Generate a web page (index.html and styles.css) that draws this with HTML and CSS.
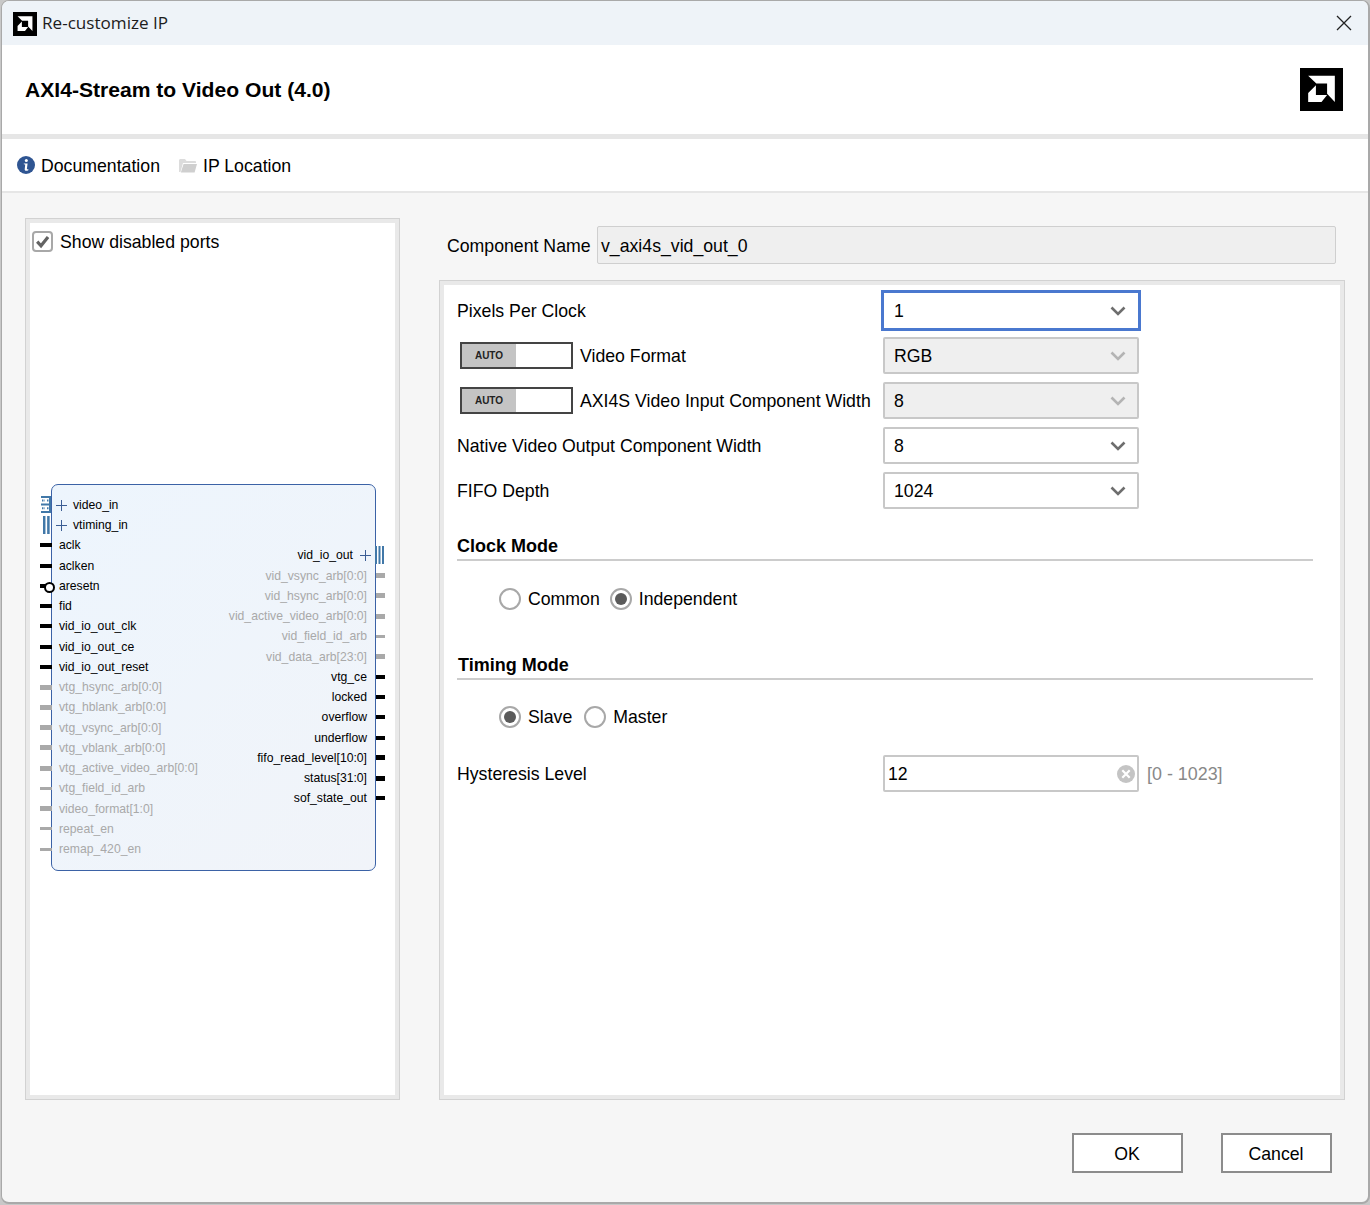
FILE: index.html
```html
<!DOCTYPE html>
<html lang="en">
<head>
<meta charset="utf-8">
<title>Re-customize IP</title>
<link rel="stylesheet" href="styles.css">
</head>
<body>
<div class="window">
  <div class="titlebar">
    <svg class="logo-small" viewBox="0 0 100 100"><rect width="100" height="100" fill="#000"/><path fill="#fff" d="M19 18H81V79L63 60V36H38Z"/><path fill="#fff" d="M37 40L19 58V79H50L63 63H37Z"/></svg>
    <span class="title-text">Re-customize IP</span>
    <svg class="close" viewBox="0 0 16 16"><path d="M1 1L15 15M15 1L1 15" stroke="#222" stroke-width="1.3" fill="none"/></svg>
  </div>
  <div class="header">
    <h1 class="ip-name">AXI4-Stream to Video Out (4.0)</h1>
    <svg class="logo-big" viewBox="0 0 100 100"><rect width="100" height="100" fill="#000"/><path fill="#fff" d="M19 18H81V79L63 60V36H38Z"/><path fill="#fff" d="M37 40L19 58V79H50L63 63H37Z"/></svg>
  </div>
  <div class="toolbar">
    <span class="tool">
      <svg class="info" viewBox="0 0 18 18"><circle cx="9" cy="9" r="9" fill="#2f5592"/><circle cx="9.3" cy="4.4" r="1.5" fill="#fff"/><path d="M6.8 7.4H10.6L9.9 12.8C9.9 13.4 10.5 13.5 11.3 13.1V14.2C9.8 15 7.6 15.1 7.7 13.2L8.2 8.6L6.8 8.3Z" fill="#fff"/></svg>
      Documentation
    </span>
    <span class="tool tool-ip">
      <svg class="folder" viewBox="0 0 18 15"><path d="M0 2.5C0 1.6.6 1 1.5 1H6L7.5 3H16C16.6 3 17 3.4 17 4V5H4L1.5 14H0Z" fill="#dcdcdc"/><path d="M4.6 6H18L15.6 14.5H1.8Z" fill="#cfcfcf"/></svg>
      IP Location
    </span>
  </div>
  <div class="main">
    <section class="symbol-panel">
      <label class="show-ports">
        <span class="checkbox"><svg viewBox="0 0 16 16"><path d="M3 8.2L6.6 12L13.2 3.8" stroke="#636363" stroke-width="3" fill="none"/></svg></span>
        Show disabled ports
      </label>
      <div class="symbol">
        <div class="ports ports-left">
          <div class="port iface"><svg class="plus" viewBox="0 0 11 11"><path d="M5.5 0V11M0 5.5H11" stroke="#3b5d94" stroke-width="1"/></svg>video_in
            <svg class="bus-icon bus-grid" viewBox="0 0 10 17"><path d="M0 1H10M0 8.5H10M0 16H10" stroke="#4178a8" stroke-width="2"/><path d="M1 4.5H4M6 4.5H9M1 12.2H4M6 12.2H9" stroke="#4178a8" stroke-width="2" stroke-dasharray="1.5 1"/><path d="M9 0V17" stroke="#4178a8" stroke-width="2"/></svg>
          </div>
          <div class="port iface"><svg class="plus" viewBox="0 0 11 11"><path d="M5.5 0V11M0 5.5H11" stroke="#3b5d94" stroke-width="1"/></svg>vtiming_in
            <svg class="bus-icon bus-two" viewBox="0 0 7 18"><path d="M1.2 0V18M5.4 0V18" stroke="#4178a8" stroke-width="2.5"/></svg>
          </div>
          <div class="port on">aclk</div>
          <div class="port on">aclken</div>
          <div class="port on neg">aresetn</div>
          <div class="port on">fid</div>
          <div class="port on">vid_io_out_clk</div>
          <div class="port on">vid_io_out_ce</div>
          <div class="port on">vid_io_out_reset</div>
          <div class="port off wide">vtg_hsync_arb[0:0]</div>
          <div class="port off wide">vtg_hblank_arb[0:0]</div>
          <div class="port off wide">vtg_vsync_arb[0:0]</div>
          <div class="port off wide">vtg_vblank_arb[0:0]</div>
          <div class="port off wide">vtg_active_video_arb[0:0]</div>
          <div class="port off thin">vtg_field_id_arb</div>
          <div class="port off wide">video_format[1:0]</div>
          <div class="port off thin">repeat_en</div>
          <div class="port off thin">remap_420_en</div>
        </div>
        <div class="ports ports-right">
          <div class="port iface">vid_io_out<svg class="plus plus-r" viewBox="0 0 11 11"><path d="M5.5 0V11M0 5.5H11" stroke="#3b5d94" stroke-width="1"/></svg>
            <svg class="bus-icon bus-three" viewBox="0 0 9 18"><path d="M1 0V18M4.5 0V18M8 0V18" stroke="#4178a8" stroke-width="2"/></svg>
          </div>
          <div class="port off wide">vid_vsync_arb[0:0]</div>
          <div class="port off wide">vid_hsync_arb[0:0]</div>
          <div class="port off wide">vid_active_video_arb[0:0]</div>
          <div class="port off thin">vid_field_id_arb</div>
          <div class="port off wide">vid_data_arb[23:0]</div>
          <div class="port on">vtg_ce</div>
          <div class="port on">locked</div>
          <div class="port on">overflow</div>
          <div class="port on">underflow</div>
          <div class="port on wide">fifo_read_level[10:0]</div>
          <div class="port on wide">status[31:0]</div>
          <div class="port on">sof_state_out</div>
        </div>
      </div>
    </section>
    <div class="config">
      <div class="name-row">
        <span class="name-label">Component Name</span>
        <span class="name-input">v_axi4s_vid_out_0</span>
      </div>
      <section class="params">
        <div class="grid">
          <div class="field-label">Pixels Per Clock</div>
          <div class="combo focus">1<svg class="chev" viewBox="0 0 16 10"><path d="M1.5 1.5L8 8L14.5 1.5" stroke="#6e6e6e" stroke-width="2.6" fill="none"/></svg></div>
          <div class="field-label auto-row"><span class="auto"><span class="auto-tag">AUTO</span></span>Video Format</div>
          <div class="combo disabled">RGB<svg class="chev" viewBox="0 0 16 10"><path d="M1.5 1.5L8 8L14.5 1.5" stroke="#b4b4b4" stroke-width="2.6" fill="none"/></svg></div>
          <div class="field-label auto-row"><span class="auto"><span class="auto-tag">AUTO</span></span>AXI4S Video Input Component Width</div>
          <div class="combo disabled">8<svg class="chev" viewBox="0 0 16 10"><path d="M1.5 1.5L8 8L14.5 1.5" stroke="#b4b4b4" stroke-width="2.6" fill="none"/></svg></div>
          <div class="field-label">Native Video Output Component Width</div>
          <div class="combo">8<svg class="chev" viewBox="0 0 16 10"><path d="M1.5 1.5L8 8L14.5 1.5" stroke="#6e6e6e" stroke-width="2.6" fill="none"/></svg></div>
          <div class="field-label">FIFO Depth</div>
          <div class="combo">1024<svg class="chev" viewBox="0 0 16 10"><path d="M1.5 1.5L8 8L14.5 1.5" stroke="#6e6e6e" stroke-width="2.6" fill="none"/></svg></div>
        </div>
        <h2 class="group group-clock">Clock Mode</h2>
        <div class="radios radios-clock">
          <span class="radio"></span><span class="radio-text">Common</span>
          <span class="radio checked"></span><span class="radio-text">Independent</span>
        </div>
        <h2 class="group group-timing">Timing Mode</h2>
        <div class="radios radios-timing">
          <span class="radio checked"></span><span class="radio-text">Slave</span>
          <span class="radio"></span><span class="radio-text">Master</span>
        </div>
        <div class="hyst">
          <div class="field-label">Hysteresis Level</div>
          <div class="text-input">12<svg class="clear" viewBox="0 0 18 18"><circle cx="9" cy="9" r="9" fill="#c4c4c4"/><path d="M5.3 5.3L12.7 12.7M12.7 5.3L5.3 12.7" stroke="#fff" stroke-width="2.2"/></svg></div>
          <div class="range">[0 - 1023]</div>
        </div>
      </section>
    </div>
  </div>
  <div class="footer">
    <button class="btn">OK</button>
    <button class="btn">Cancel</button>
  </div>
</div>
</body>
</html>
```
FILE: styles.css
```css
* { box-sizing: border-box; }
html, body { margin: 0; padding: 0; }
body {
  width: 1370px;
  height: 1205px;
  background: #c8c8c8;
  font-family: "Liberation Sans", Arial, sans-serif;
  font-size: 17.7px;
  color: #000;
  overflow: hidden;
}
.window {
  width: 1369px;
  height: 1204px;
  margin-left: 1px;
  border: 1px solid #a9a9a9;
  border-bottom-width: 2px;
  border-right-width: 2px;
  border-radius: 8px;
  background: #f6f6f6;
  display: flex;
  flex-direction: column;
  overflow: hidden;
}
.titlebar {
  height: 44px;
  flex: none;
  background: #eef3f8;
  display: flex;
  align-items: center;
  padding: 0 16px 0 11px;
}
.logo-small { width: 24px; height: 24px; margin-top: 1px; }
.title-text {
  font-family: "Open Sans", sans-serif;
  font-size: 17.1px;
  color: #1c1c1c;
  margin: -2px 0 0 5px;
  flex: 1;
}
.close { width: 16px; height: 16px; }
.header {
  height: 89px;
  flex: none;
  background: #fff;
  display: flex;
  align-items: center;
  justify-content: space-between;
  padding: 1px 25px 0 23px;
}
.ip-name { margin: 0; font-size: 21.1px; font-weight: 700; }
.logo-big { width: 43px; height: 43px; margin-top: -2px; }
.toolbar {
  height: 59px;
  flex: none;
  background: #fff;
  border-top: 5px solid #e6e6e6;
  border-bottom: 2px solid #e6e6e6;
  display: flex;
  align-items: center;
  padding-left: 15px;
}
.tool { display: inline-flex; align-items: center; gap: 6px; padding-top: 2px; }
.tool-ip { margin-left: 19px; }
.info { width: 18px; height: 18px; margin-top: -2px; }
.folder { width: 18px; height: 15px; margin-top: -2px; }
.main {
  flex: none;
  height: 907px;
  display: flex;
  padding: 25px 0 0 23px;
  gap: 39px;
}
.symbol-panel {
  width: 375px;
  height: 882px;
  background: #fff;
  border: 1px solid #d2d2d2;
  box-shadow: inset 0 0 0 4px #e9e9e9;
  padding: 12px 0 0 6px;
}
.show-ports { display: flex; align-items: center; gap: 7px; height: 20px; padding-top: 2px; }
.checkbox {
  width: 21px;
  height: 21px;
  margin-top: -2px;
  border: 2px solid #a8a8a8;
  border-radius: 4px;
  background: #fff;
  display: flex;
  flex: none;
}
.checkbox svg { width: 17px; height: 17px; }
.symbol {
  position: relative;
  width: 325px;
  height: 387px;
  margin: 233px 0 0 19px;
  border: 1px solid #3b62a6;
  border-radius: 7px;
  background: linear-gradient(135deg, #edf5fd, #f1f4f9);
  display: flex;
  justify-content: space-between;
  font-size: 12.2px;
}
.ports { display: flex; flex-direction: column; }
.ports-left { padding: 9.8px 0 0 7px; }
.ports-right { padding: 60.4px 8px 0 0; text-align: right; }
.port { height: 20.25px; line-height: 20.25px; position: relative; white-space: nowrap; }
.port.off { color: #a9a9a9; }
.port.on { color: #000; }
.port.on::before, .port.off::before {
  content: "";
  position: absolute;
  width: 12px;
  height: 4px;
  top: 8px;
  background: #000;
}
.port.off::before { background: #a9a9a9; }
.port.wide::before { height: 5px; top: 7.5px; }
.port.thin::before { height: 3px; top: 8.5px; }
.ports-left .port::before { left: -19px; }
.ports-right .port::before { right: -18px; width: 9px; }
.neg::after {
  content: "";
  position: absolute;
  left: -15px;
  top: 6px;
  width: 7px;
  height: 7px;
  border: 2px solid #000;
  border-radius: 50%;
  background: #fff;
}
.ports-left .iface { padding-left: 14px; }
.ports-right .iface { padding-right: 14px; }
.plus { position: absolute; width: 11px; height: 11px; top: 5px; left: -3px; }
.plus-r { left: auto; right: -4px; }
.bus-icon { position: absolute; }
.bus-grid { width: 10px; height: 17px; left: -18px; top: 1px; }
.bus-two { width: 7px; height: 18px; left: -16px; top: 1px; }
.bus-three { width: 9px; height: 18px; right: -17px; top: 1px; }
.config { width: 906px; display: flex; flex-direction: column; }
.name-row { display: flex; align-items: center; height: 38px; margin-top: 8px; padding-left: 8px; }
.name-label { width: 150px; padding-top: 2px; }
.name-input {
  width: 739px;
  height: 38px;
  background: #efefef;
  border: 1px solid #cfcfcf;
  border-radius: 2px;
  padding-left: 3px;
  line-height: 38px;
}
.params {
  margin-top: 16px;
  height: 820px;
  background: #fff;
  border: 1px solid #d2d2d2;
  box-shadow: inset 0 0 0 4px #e9e9e9;
  padding: 11px 0 0 17px;
}
.grid {
  display: grid;
  grid-template-columns: 426px 256px;
  grid-auto-rows: 37px;
  row-gap: 8px;
}
.field-label { display: flex; align-items: center; height: 37px; padding-top: 2px; }
.auto-row { padding-left: 3px; }
.auto {
  width: 113px;
  height: 27px;
  margin: -2px 7px 0 0;
  border: 2px solid #444;
  background: #fff;
  flex: none;
  display: flex;
}
.auto-tag {
  width: 54px;
  background: #c4c4c4;
  font-size: 10px;
  font-weight: 700;
  color: #222;
  display: flex;
  align-items: center;
  justify-content: center;
}
.combo {
  position: relative;
  height: 37px;
  background: #fff;
  border: 2px solid #c8c8c8;
  border-radius: 2px;
  padding-left: 9px;
  line-height: 35px;
}
.combo.disabled { background: #efefef; }
.combo.focus {
  margin: -2px;
  height: 41px;
  width: 260px;
  border: 3px solid #4a78cf;
  border-radius: 0;
  padding-left: 10px;
  line-height: 37px;
}
.chev { position: absolute; right: 11px; top: 12px; width: 16px; height: 10px; }
.combo.focus .chev { right: 12px; top: 13px; }
.group {
  width: 856px;
  margin: 27px 0 0;
  height: 25px;
  line-height: 20px;
  font-size: 18px;
  font-weight: 700;
  border-bottom: 2px solid #ccc;
}
.group-timing { margin-top: 45px; padding-left: 1px; }
.radios {
  display: flex;
  align-items: center;
  height: 22px;
  margin-top: 27px;
  padding-left: 42px;
}
.radios-timing { margin-top: 26px; }
.radio {
  width: 22px;
  height: 22px;
  flex: none;
  border: 2px solid #a8a8a8;
  border-radius: 50%;
  background: #fff;
  display: flex;
  align-items: center;
  justify-content: center;
}
.radio.checked::after {
  content: "";
  width: 12px;
  height: 12px;
  border-radius: 50%;
  background: #5a5a5a;
}
.radio-text { margin: 0 10px 0 7px; }
.radios-timing .radio-text { margin-right: 12px; }
.hyst {
  display: grid;
  grid-template-columns: 426px 256px auto;
  margin-top: 27px;
  align-items: center;
}
.text-input {
  position: relative;
  height: 37px;
  background: #fff;
  border: 2px solid #c8c8c8;
  border-radius: 2px;
  padding-left: 3px;
  line-height: 35px;
}
.clear { position: absolute; right: 2px; top: 8px; width: 18px; height: 18px; }
.range { margin-left: 8px; color: #888; padding-top: 2px; font-size: 17.9px; }
.footer {
  flex: 1;
  display: flex;
  justify-content: flex-end;
  gap: 38px;
  padding: 33px 36px 0 0;
}
.btn {
  width: 111px;
  height: 40px;
  background: #fff;
  border: 2px solid #8c8c8c;
  border-radius: 0;
  font-family: inherit;
  font-size: 17.7px;
  color: #000;
  padding: 2px 1px 0 0;
}
```
